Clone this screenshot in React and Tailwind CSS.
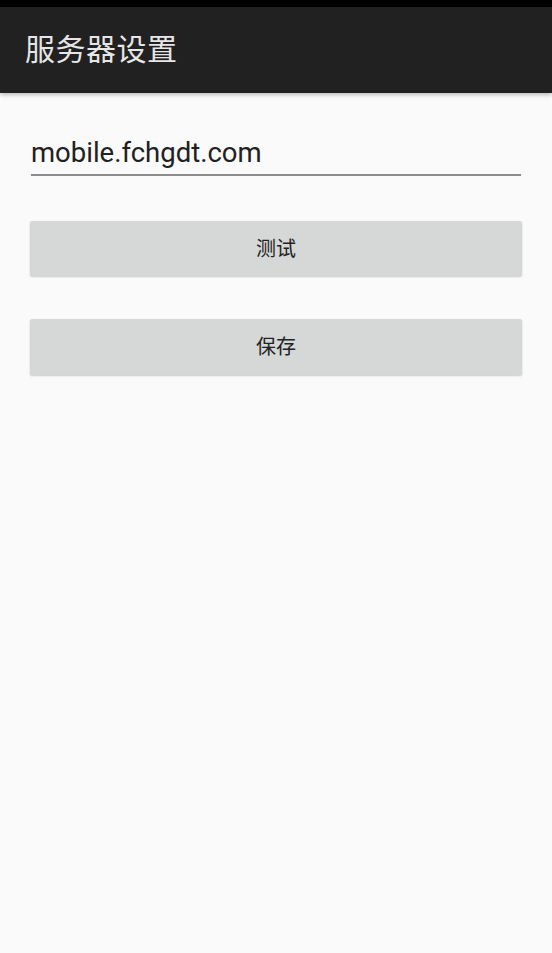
export default function App() {
  const cjk = { fontFamily: 'Roboto, "Noto Sans CJK SC", sans-serif' };
  return (
    <div className="w-[552px] h-[953px] bg-[#fafafa] flex flex-col overflow-hidden" style={cjk}>
      <div className="h-[7px] bg-black shrink-0" />
      <div className="h-[86px] bg-[#212121] flex items-center px-[25px] shrink-0 shadow-[0_2px_4px_rgba(0,0,0,0.25)] relative z-10">
        <span className="text-[30px] text-[#e6e6e6] leading-none tracking-[0.5px]">服务器设置</span>
      </div>
      <div className="flex flex-col px-[30px] pt-[40px]">
        <div className="px-[1px]">
          <div className="text-[27.5px] text-[#212121] leading-[40px]">mobile.fchgdt.com</div>
          <div className="h-[2px] bg-[#8c8c8c] mt-[1px]" />
        </div>
        <button className="mt-[45px] h-[55px] bg-[#d6d7d7] rounded-[2px] shadow-[0_1px_2px_rgba(0,0,0,0.2)] text-[20px] text-[#222] flex items-center justify-center">
          测试
        </button>
        <button className="mt-[43px] h-[56px] bg-[#d6d7d7] rounded-[2px] shadow-[0_1px_2px_rgba(0,0,0,0.2)] text-[20px] text-[#222] flex items-center justify-center">
          保存
        </button>
      </div>
    </div>
  );
}
